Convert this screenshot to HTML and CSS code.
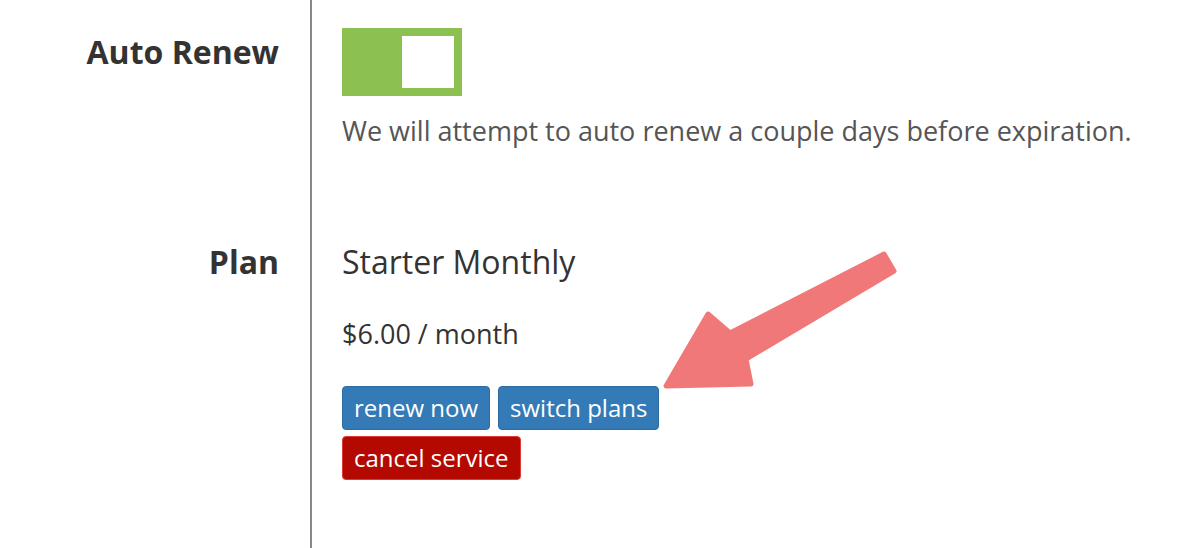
FILE: index.html
```html
<!DOCTYPE html>
<html>
   <head>
      <meta charset="UTF-8" />
      <title>Service</title>
      <link rel="stylesheet" href="styles.css">
   </head>
   <body>
      <div class="page">
         <div class="row row-renew">
            <div class="label">Auto Renew</div>
            <div class="field">
               <div class="toggle"><span class="knob"></span></div>
               <p class="hint">We will attempt to auto renew a couple days before expiration.</p>
            </div>
         </div>
         <div class="row row-plan">
            <div class="label">Plan</div>
            <div class="field">
               <div class="plan-name">Starter Monthly</div>
               <div class="price">$6.00 / month</div>
               <div class="actions">
                  <button class="btn btn-blue">renew now</button>
                  <button class="btn btn-blue">switch plans</button>
               </div>
               <div class="actions">
                  <button class="btn btn-red">cancel service</button>
               </div>
            </div>
         </div>
      </div>
      <!-- annotation arrow -->
      <svg class="arrow" width="1198" height="548" viewBox="0 0 1198 548">
         <polygon points="730,333 884,254 894,271 746,359 751,384 666,386 708,314"
            fill="#f07878" stroke="#f07878" stroke-width="5" stroke-linejoin="round" />
      </svg>
   </body>
</html>
```

FILE: styles.css
```css
body { margin:0; font-family:'Open Sans','Noto Sans',sans-serif; color:#333; background:#fff; }
.page { height:548px; overflow:hidden; display:flex; flex-direction:column; }
.row { display:flex; }
.label { width:279px; padding-right:31px; text-align:right; font-weight:bold; font-size:32px; line-height:40px; color:#333; border-right:2px solid #888; }
.field { padding-left:30px; }
.row-renew .label { padding-top:32px; }
.row-renew .field { padding-top:28px; padding-bottom:93px; }
.toggle { width:120px; height:68px; background:#8cc152; box-sizing:border-box; padding:8px; display:flex; justify-content:flex-end; }
.knob { width:52px; height:52px; background:#fff; }
.hint { margin:17px 0 0; font-size:27px; line-height:36px; color:#555; }
.row-plan { flex:1; }
.row-plan .label { padding-top:0; }
.plan-name { font-size:32px; line-height:40px; }
.price { font-size:27px; line-height:36px; margin-top:34px; }
.actions { display:flex; gap:8px; margin-top:6px; }
.price + .actions { margin-top:34px; }
.btn { font-family:inherit; font-size:24px; color:#fff; padding:3px 11px; border-radius:4px; line-height:36px; cursor:pointer; }
.btn-blue { background:#337ab7; border:1px solid #2e6da4; }
.btn-red { background:#b40900; border:1px solid #dc3a34; }
.arrow { position:absolute; left:0; top:0; pointer-events:none; }
```
